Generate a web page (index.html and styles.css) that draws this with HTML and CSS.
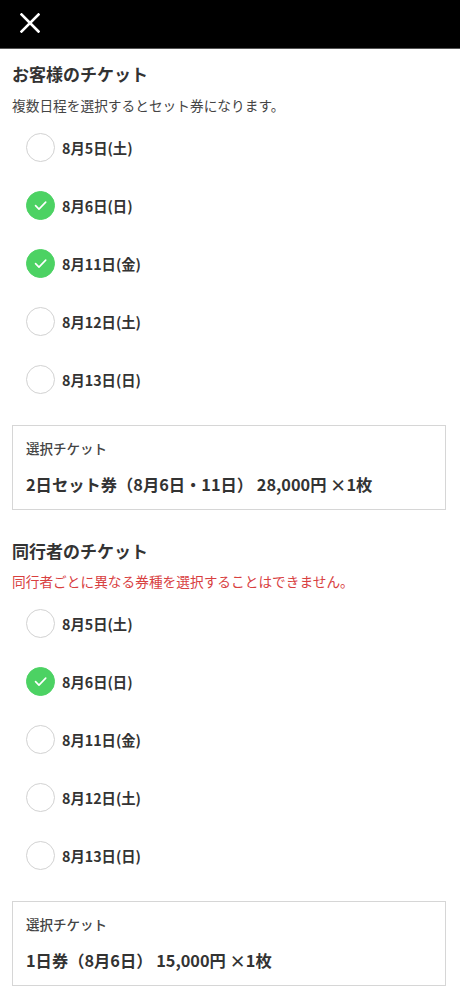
FILE: index.html
```html
<!DOCTYPE html>
<html lang="ja">
<head>
<meta charset="utf-8">
<link rel="stylesheet" href="styles.css">
</head>
<body>
<header class="topbar">
  <svg class="close" width="20" height="20" viewBox="0 0 20 20"><path d="M1.5 1.5 L18.5 18.5 M18.5 1.5 L1.5 18.5" stroke="#fff" stroke-width="2.6" stroke-linecap="square" fill="none"/></svg>
</header>
<main class="content">
  <section class="section">
    <h2 class="title">お客様のチケット</h2>
    <p class="note">複数日程を選択するとセット券になります。</p>
    <ul class="dates">
      <li class="date"><span class="radio"></span><span class="label">8月5日(土)</span></li>
      <li class="date"><span class="radio on"><svg viewBox="0 0 30 30"><path d="M9.5 15.2 L13.3 19 L20.8 11.3" stroke="#fff" stroke-width="1.8" fill="none" stroke-linecap="round" stroke-linejoin="round"/></svg></span><span class="label">8月6日(日)</span></li>
      <li class="date"><span class="radio on"><svg viewBox="0 0 30 30"><path d="M9.5 15.2 L13.3 19 L20.8 11.3" stroke="#fff" stroke-width="1.8" fill="none" stroke-linecap="round" stroke-linejoin="round"/></svg></span><span class="label">8月11日(金)</span></li>
      <li class="date"><span class="radio"></span><span class="label">8月12日(土)</span></li>
      <li class="date"><span class="radio"></span><span class="label">8月13日(日)</span></li>
    </ul>
    <div class="box">
      <div class="box-label">選択チケット</div>
      <div class="box-value">2日セット券（8月6日・11日） 28,000円 ×1枚</div>
    </div>
  </section>
  <section class="section second">
    <h2 class="title">同行者のチケット</h2>
    <p class="note warn">同行者ごとに異なる券種を選択することはできません。</p>
    <ul class="dates">
      <li class="date"><span class="radio"></span><span class="label">8月5日(土)</span></li>
      <li class="date"><span class="radio on"><svg viewBox="0 0 30 30"><path d="M9.5 15.2 L13.3 19 L20.8 11.3" stroke="#fff" stroke-width="1.8" fill="none" stroke-linecap="round" stroke-linejoin="round"/></svg></span><span class="label">8月6日(日)</span></li>
      <li class="date"><span class="radio"></span><span class="label">8月11日(金)</span></li>
      <li class="date"><span class="radio"></span><span class="label">8月12日(土)</span></li>
      <li class="date"><span class="radio"></span><span class="label">8月13日(日)</span></li>
    </ul>
    <div class="box">
      <div class="box-label">選択チケット</div>
      <div class="box-value">1日券（8月6日） 15,000円 ×1枚</div>
    </div>
  </section>
</main>
</body>
</html>
```
FILE: styles.css
```css
* { box-sizing: border-box; }
html, body { margin: 0; padding: 0; background: #fff; }
body {
  font-family: "Noto Sans CJK JP", "Noto Sans", sans-serif;
  color: #333;
  width: 460px;
}
.topbar {
  height: 49px;
  background: #000;
  border-bottom: 1px solid #555;
  display: flex;
  align-items: center;
  padding-left: 20px;
}
.close { display: block; margin-top: -2px; }
.content { padding: 0 14px 0 12px; }
.section { padding-top: 13px; }
.section.second { padding-top: 29px; }
.title {
  margin: 0;
  font-size: 17px;
  line-height: 24px;
  font-weight: 700;
  color: #333;
}
.note {
  margin: 9px 0 0;
  font-size: 13.7px;
  line-height: 20px;
  color: #444;
}
.second .note { margin-top: 8px; }
.note.warn { color: #d8403f; }
.dates {
  list-style: none;
  margin: 3px 0 0;
  padding: 0 0 0 14px;
}
.date {
  height: 58px;
  display: flex;
  align-items: center;
}
.radio {
  width: 29px;
  height: 29px;
  border-radius: 50%;
  border: 1px solid #d2d2d2;
  background: #fff;
  flex: none;
  display: flex;
  align-items: center;
  justify-content: center;
}
.radio.on { background: #4cd263; border-color: #4cd263; }
.radio svg { width: 29px; height: 29px; display: block; }
.label {
  margin-left: 7px;
  font-size: 14.3px;
  font-weight: 700;
  color: #333;
}
.box {
  margin-top: 17px;
  border: 1px solid #d6d6d6;
  padding: 12px 13px 13px;
}
.box-label {
  font-size: 13.5px;
  line-height: 20px;
  font-weight: 500;
  color: #444;
}
.box-value {
  margin-top: 14px;
  font-size: 16.3px;
  line-height: 24px;
  font-weight: 700;
  color: #333;
}
```
